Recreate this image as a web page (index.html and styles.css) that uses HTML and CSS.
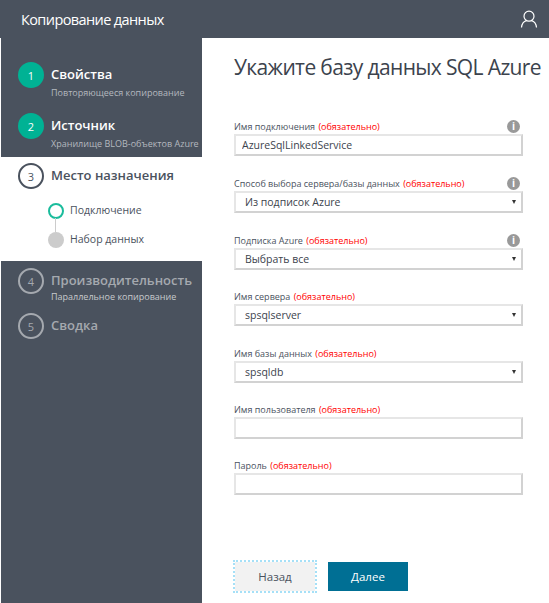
FILE: index.html
```html
<!DOCTYPE html>
<html lang="en">
  <head>
    <meta charset="UTF-8" />
    <title>Копирование данных</title>
    <link rel="stylesheet" href="styles.css">
  </head>
  <body>
    <header class="topbar">
      <span class="topbar-title">Копирование данных</span>
      <svg class="user-icon" width="18" height="18" viewBox="0 0 18 18" fill="none" stroke="#fff" stroke-width="1.2">
        <circle cx="9" cy="6.2" r="5" />
        <path d="M1.5 17.5c.4-4 3-6.4 5-6.9M16.5 17.5c-.4-4-3-6.4-5-6.9" />
      </svg>
    </header>
    <div class="layout">
      <nav class="sidebar">
        <div class="step done">
          <span class="num">1</span>
          <div>
            <div class="step-name">Свойства</div>
            <div class="step-sub">Повторяющееся копирование</div>
          </div>
        </div>
        <div class="step done">
          <span class="num">2</span>
          <div>
            <div class="step-name">Источник</div>
            <div class="step-sub">Хранилище BLOB-объектов Azure</div>
          </div>
        </div>
        <div class="current">
          <div class="step active">
            <span class="num">3</span>
            <div class="step-name">Место назначения</div>
          </div>
          <div class="substep">
            <span class="dot dot-open"></span>
            <span class="substep-name">Подключение</span>
          </div>
          <div class="substep">
            <span class="dot dot-fill"></span>
            <span class="substep-name">Набор данных</span>
          </div>
        </div>
        <div class="step todo">
          <span class="num">4</span>
          <div>
            <div class="step-name">Производительность</div>
            <div class="step-sub">Параллельное копирование</div>
          </div>
        </div>
        <div class="step todo">
          <span class="num">5</span>
          <div class="step-name">Сводка</div>
        </div>
      </nav>
      <main class="content">
        <h1>Укажите базу данных SQL Azure</h1>
        <form class="form">
          <div class="field">
            <div class="label-row">
              <label>Имя подключения <em>(обязательно)</em></label>
              <span class="info">i</span>
            </div>
            <input class="box" type="text" value="AzureSqlLinkedService" />
          </div>
          <div class="field">
            <div class="label-row">
              <label>Способ выбора сервера/базы данных <em>(обязательно)</em></label>
              <span class="info">i</span>
            </div>
            <div class="select-wrap">
              <select class="box"><option>Из подписок Azure</option></select>
            </div>
          </div>
          <div class="field field-short">
            <div class="label-row">
              <label>Подписка Azure <em>(обязательно)</em></label>
              <span class="info">i</span>
            </div>
            <div class="select-wrap">
              <select class="box"><option>Выбрать все</option></select>
            </div>
          </div>
          <div class="field">
            <div class="label-row">
              <label>Имя сервера <em>(обязательно)</em></label>
            </div>
            <div class="select-wrap">
              <select class="box"><option>spsqlserver</option></select>
            </div>
          </div>
          <div class="field field-short">
            <div class="label-row">
              <label>Имя базы данных <em>(обязательно)</em></label>
            </div>
            <div class="select-wrap">
              <select class="box"><option>spsqldb</option></select>
            </div>
          </div>
          <div class="field field-short">
            <div class="label-row">
              <label>Имя пользователя <em>(обязательно)</em></label>
            </div>
            <input class="box" type="text" />
          </div>
          <div class="field">
            <div class="label-row">
              <label>Пароль <em>(обязательно)</em></label>
            </div>
            <input class="box" type="password" />
          </div>
          <div class="buttons">
            <button type="button" class="btn btn-back">Назад</button>
            <button type="button" class="btn btn-next">Далее</button>
          </div>
        </form>
      </main>
    </div>
  </body>
</html>
```

FILE: styles.css
```css
* {
  box-sizing: border-box;
  font-family: "Open Sans", "Noto Sans", sans-serif;
}
body {
  margin: 0;
  background-color: #fff;
  color: #4a525e;
}
.topbar {
  height: 38px;
  background-color: #4a525e;
  display: flex;
  align-items: center;
  justify-content: space-between;
  padding: 0 11px 0 21px;
  color: #fff;
}
.topbar-title {
  font-size: 14.5px;
  letter-spacing: -0.6px;
}
.user-icon {
  margin-top: -1px;
}
.layout {
  display: flex;
  height: 565px;
}
.sidebar {
  flex: none;
  width: 201px;
  margin-left: 1px;
  background-color: #4a525e;
  color: #fff;
  padding-top: 24px;
}
.step {
  display: flex;
  gap: 7px;
  padding-left: 17px;
  height: 51px;
}
.num {
  width: 26px;
  height: 26px;
  border-radius: 50%;
  flex: none;
  display: flex;
  align-items: center;
  justify-content: center;
  font-size: 11px;
  border: 2px solid transparent;
}
.step-name {
  font-size: 13px;
  font-weight: 600;
  line-height: 22px;
  margin-top: 1px;
  white-space: nowrap;
}
.step-sub {
  font-size: 9px;
  line-height: 12px;
  color: #b4b8be;
  margin-top: 2px;
  white-space: nowrap;
}
.done .num {
  background-color: #00b294;
}
.done + .done {
  height: 44px;
}
.current {
  background-color: #fff;
  color: #4a525e;
  height: 104px;
  padding-top: 6px;
}
.active {
  height: 33px;
}
.active .num {
  border-color: #4a525e;
}
.substep {
  display: flex;
  align-items: center;
  gap: 6px;
  padding-left: 47px;
  height: 29px;
  font-size: 10.5px;
  position: relative;
}
.substep-name {
  margin-top: -2px;
}
.dot {
  width: 16px;
  height: 16px;
  border-radius: 50%;
  flex: none;
}
.dot-open {
  border: 2px solid #1abc9c;
  background-color: #fff;
}
.dot-fill {
  background-color: #ccc;
}
/* line between the two small circles */
.substep + .substep::before {
  content: "";
  position: absolute;
  left: 54px;
  top: -7px;
  width: 1px;
  height: 14px;
  background-color: #ccc;
}
.todo {
  height: 45px;
  margin-top: 7px;
  color: #a5a9af;
}
.todo + .todo {
  margin-top: 0;
}
.todo .num {
  border-color: #a5a9af;
}
.todo .step-sub {
  color: #c8cacd;
  margin-top: 0;
}
.content {
  flex: 1;
  min-width: 0;
  padding: 14px 26px 0 32px;
}
h1 {
  margin: 0 0 38px;
  font-size: 21px;
  font-weight: 400;
  line-height: 30px;
  white-space: nowrap;
  letter-spacing: -0.63px;
  color: #3c434d;
}
.field {
  margin-bottom: 21px;
}
.field-short {
  margin-bottom: 20px;
}
.label-row {
  display: flex;
  justify-content: space-between;
  align-items: center;
  height: 14px;
  padding-right: 3px;
  margin-top: -1px;
  margin-bottom: 1px;
}
.label-row label {
  font-size: 9px;
  white-space: nowrap;
}
em {
  font-style: normal;
  color: #f00;
  margin-left: 1px;
}
.info {
  width: 13px;
  height: 13px;
  border-radius: 50%;
  background-color: #999;
  color: #fff;
  font-size: 10px;
  font-weight: 700;
  line-height: 13px;
  text-align: center;
}
.box {
  display: block;
  width: 100%;
  height: 22px;
  padding: 0 6px;
  border: 2px solid #e6e6e6;
  border-right-color: #d2d2d2;
  border-bottom-color: #d2d2d2;
  outline: 0;
  border-radius: 0;
  background-color: #fff;
  color: #3c434d;
  font-size: 10.5px;
}
.select-wrap {
  position: relative;
}
.select-wrap select {
  appearance: none;
  padding-left: 9px;
}
.select-wrap::after {
  content: "";
  position: absolute;
  right: 7px;
  top: 9px;
  border-left: 2.5px solid transparent;
  border-right: 2.5px solid transparent;
  border-top: 4px solid #333;
}
.buttons {
  display: flex;
  gap: 13px;
  margin-top: 67px;
  padding-left: 1px;
}
.btn {
  width: 80px;
  height: 29px;
  border: 0;
  font-size: 11.5px;
}
.btn-back {
  background-color: #f2f2f2;
  color: #4a525e;
  outline: 2px dotted #a6e0f7;
}
.btn-next {
  background-color: #006f94;
  color: #fff;
}
```
